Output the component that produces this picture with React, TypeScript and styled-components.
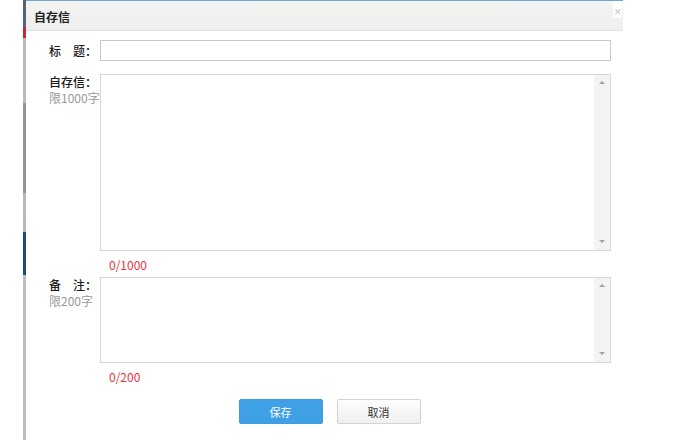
import React from "react";
import styled, { createGlobalStyle } from "styled-components";

const GlobalStyle = createGlobalStyle`
  html, body {
    margin: 0;
    padding: 0;
    background: #fff;
  }
  body {
    font-family: "Noto Sans CJK SC", "Noto Sans", sans-serif;
    font-size: 12px;
    color: #333;
  }
`;

const Page = styled.div`
  display: flex;
  width: 687px;
  height: 440px;
  overflow: hidden;
  background: #fff;
`;

const Gutter = styled.div`
  width: 23px;
  flex: none;
`;

const PageEdge = styled.div`
  width: 3px;
  flex: none;
  display: flex;
  flex-direction: column;
`;

const EdgePiece = styled.div<{ $color: string; $h: number }>`
  height: ${(p) => p.$h}px;
  flex: none;
  background: ${(p) => p.$color};
`;

const Dialog = styled.div`
  width: 597px;
  flex: none;
  display: flex;
  flex-direction: column;
  background: #fff;
`;

const Header = styled.div`
  height: 29px;
  display: flex;
  align-items: center;
  justify-content: space-between;
  padding: 0 1px 0 8px;
  border-top: 1px solid #6ea6d8;
  border-bottom: 1px solid #e2e2e2;
  background: linear-gradient(#f5f4f3, #efefef);
`;

const Title = styled.span`
  font-size: 12px;
  font-weight: bold;
  color: #222;
  padding-top: 2px;
`;

const Close = styled.span`
  align-self: flex-start;
  width: 9px;
  height: 17px;
  background: #fff;
  color: #c4c4c4;
  font-size: 9px;
  line-height: 22px;
  text-align: center;
`;

const Body = styled.div`
  display: grid;
  grid-template-columns: 51px 511px;
  padding: 9px 12px 0 23px;
`;

const Label = styled.div<{ $center?: boolean }>`
  display: flex;
  flex-direction: column;
  justify-content: ${(p) => (p.$center ? "center" : "flex-start")};
  line-height: 16px;
  font-weight: 500;
  color: #1a1a1a;
  white-space: nowrap;
`;

const Hint = styled.span`
  font-weight: normal;
  color: #999;
`;

const TextInput = styled.input`
  box-sizing: border-box;
  width: 511px;
  height: 21px;
  margin: 0 0 13px;
  border: 1px solid #c9c9c9;
  outline: none;
  font: inherit;
`;

const TextBox = styled.div<{ $h: number }>`
  box-sizing: border-box;
  height: ${(p) => p.$h}px;
  display: flex;
  border: 1px solid #d6d6d6;
  border-right-color: #dcdcdc;
`;

const Area = styled.textarea`
  flex: 1;
  border: none;
  outline: none;
  resize: none;
  font: inherit;
  padding: 3px 5px;
`;

const Track = styled.div`
  width: 16px;
  flex: none;
  display: flex;
  flex-direction: column;
  justify-content: space-between;
  align-items: center;
  padding: 6px 0 7px;
  background: #f3f3f3;
`;

const Arrow = styled.span<{ $down?: boolean }>`
  width: 0;
  height: 0;
  border-left: 3px solid transparent;
  border-right: 3px solid transparent;
  ${(p) =>
    p.$down
      ? "border-top: 3px solid #a3a3a3;"
      : "border-bottom: 3px solid #a3a3a3;"}
`;

const Counter = styled.div<{ $after: number }>`
  padding: 6px 0 0 9px;
  margin-bottom: ${(p) => p.$after}px;
  line-height: 16px;
  color: #e8323c;
`;

const Actions = styled.div`
  display: flex;
  justify-content: center;
  gap: 14px;
  padding: 14px 0 0 10px;
`;

const Button = styled.button<{ $primary?: boolean }>`
  box-sizing: border-box;
  width: 84px;
  height: 25px;
  border-radius: 2px;
  font-family: inherit;
  font-size: 11px;
  cursor: pointer;
  border: 1px solid ${(p) => (p.$primary ? "#3d9de3" : "#d3d3d3")};
  background: ${(p) =>
    p.$primary ? "#40a0e6" : "linear-gradient(#fefefe, #efefef)"};
  color: ${(p) => (p.$primary ? "#fff" : "#333")};
`;

const edge: [string, number][] = [
  ["#54647a", 27],
  ["#c22a3c", 11],
  ["#bababa", 65],
  ["#8e949c", 90],
  ["#b8b8b8", 39],
  ["#1f4d7a", 43],
  ["#bdbdbd", 165],
];

function Scroller({ h }: { h: number }) {
  return (
    <TextBox $h={h}>
      <Area />
      <Track>
        <Arrow />
        <Arrow $down />
      </Track>
    </TextBox>
  );
}

export default function App() {
  return (
    <Page>
      <GlobalStyle />
      <Gutter />
      <PageEdge>
        {edge.map(([c, h], i) => (
          <EdgePiece key={i} $color={c} $h={h} />
        ))}
      </PageEdge>
      <Dialog>
        <Header>
          <Title>自存信</Title>
          <Close>✕</Close>
        </Header>
        <Body>
          <Label $center style={{ height: 21 }}>标　题：</Label>
          <TextInput />

          <Label>
            <span>自存信：</span>
            <Hint>限1000字</Hint>
          </Label>
          <Scroller h={177} />
          <span />
          <Counter $after={4}>0/1000</Counter>

          <Label>
            <span>备　注：</span>
            <Hint>限200字</Hint>
          </Label>
          <Scroller h={86} />
          <span />
          <Counter $after={0}>0/200</Counter>
        </Body>
        <Actions>
          <Button $primary>保存</Button>
          <Button>取消</Button>
        </Actions>
      </Dialog>
    </Page>
  );
}
